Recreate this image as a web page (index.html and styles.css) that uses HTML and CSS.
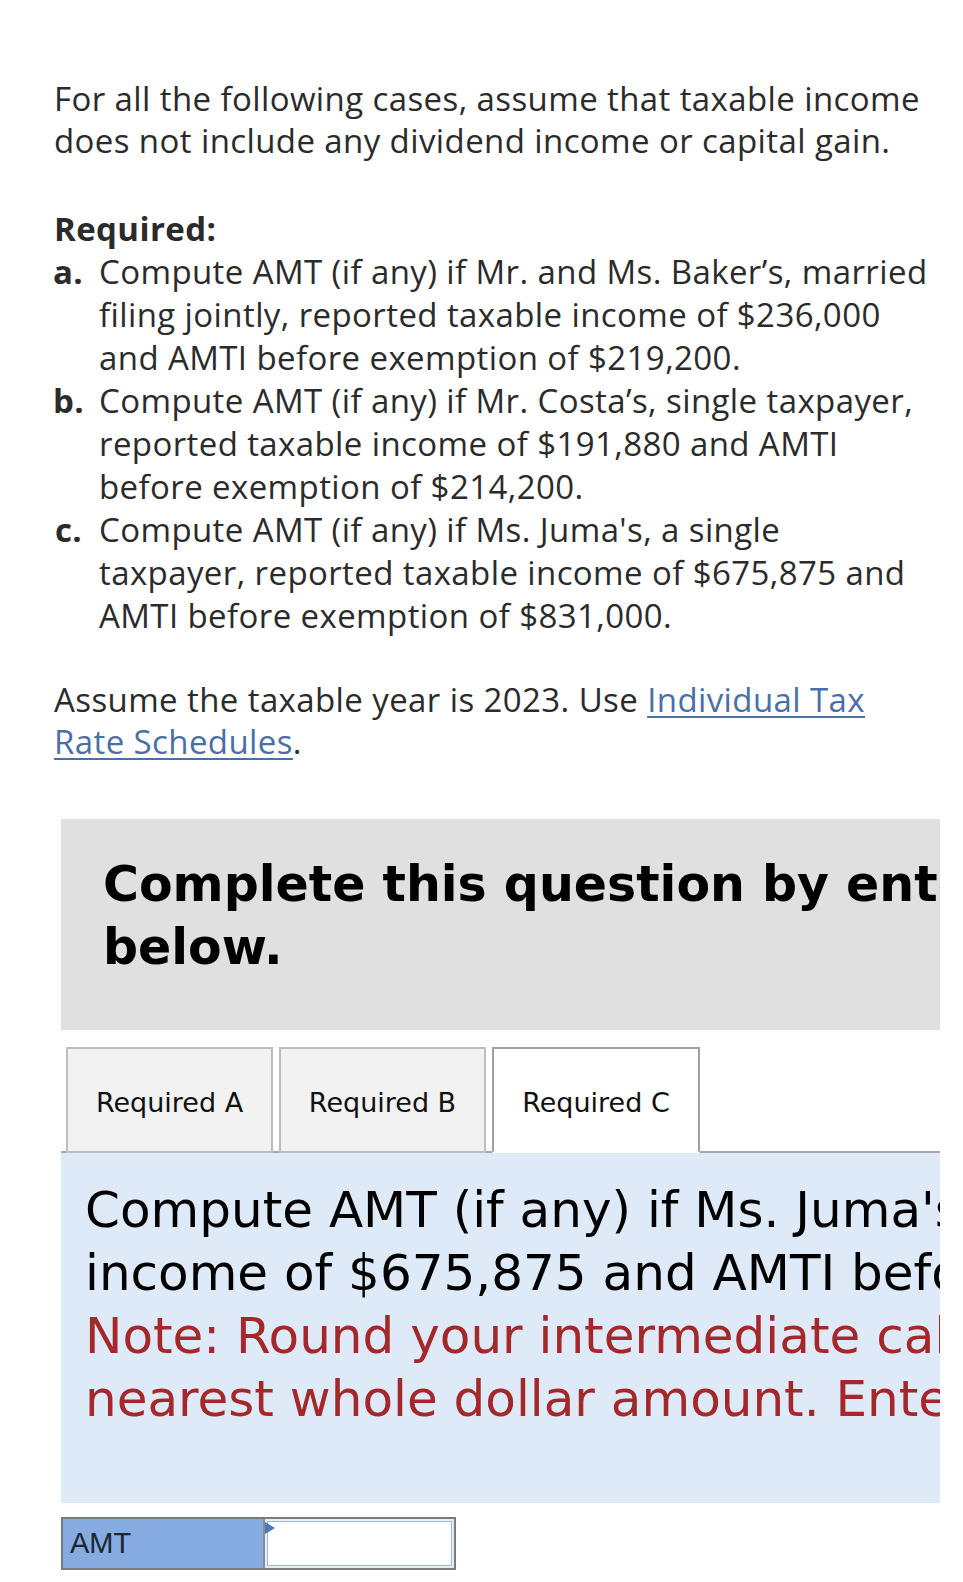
FILE: index.html
```html
<!DOCTYPE html>
<html lang="en">
<head>
<meta charset="utf-8">
<title>AMT question</title>
<link rel="stylesheet" href="styles.css">
</head>
<body>
<div class="intro">
  <p class="para">For all the following cases, assume that taxable income<br>does not include any dividend income or capital gain.</p>
  <p class="req-title">Required:</p>
  <ol class="req-list">
    <li><span class="mark">a.</span><span class="body">Compute AMT (if any) if Mr. and Ms. Baker’s, married<br>filing jointly, reported taxable income of $236,000<br>and AMTI before exemption of $219,200.</span></li>
    <li><span class="mark">b.</span><span class="body">Compute AMT (if any) if Mr. Costa’s, single taxpayer,<br>reported taxable income of $191,880 and AMTI<br>before exemption of $214,200.</span></li>
    <li><span class="mark mark-c">c.</span><span class="body">Compute AMT (if any) if Ms. Juma's, a single<br>taxpayer, reported taxable income of $675,875 and<br>AMTI before exemption of $831,000.</span></li>
  </ol>
  <p class="para assume">Assume the taxable year is 2023. Use <a class="link" href="#">Individual Tax<br>Rate Schedules</a>.</p>
</div>

<div class="question">
  <div class="banner">
    <h2 class="banner-title">Complete this question by entering your answers in the tabs<br>below.</h2>
  </div>

  <div class="tabs">
    <div class="tab">Required A</div>
    <div class="tab">Required B</div>
    <div class="tab tab-active">Required C</div>
  </div>

  <div class="panel">
    <p class="panel-text">Compute AMT (if any) if Ms. Juma's, a single taxpayer, reported taxable<br>income of $675,875 and AMTI before exemption of $831,000.<br><span class="note">Note: Round your intermediate calculations and final answer to the<br>nearest whole dollar amount. Enter 0 if no AMT is due.</span></p>
  </div>

  <div class="answer">
    <div class="answer-label">AMT</div>
    <div class="answer-input"><span class="marker"></span></div>
  </div>
</div>
</body>
</html>
```

FILE: styles.css
```css
html, body {
  margin: 0;
  padding: 0;
  background: #ffffff;
}

body {
  width: 963px;
  overflow: hidden;
}

.intro {
  padding: 78px 20px 0 54px;
  font-family: "Open Sans", Lato, sans-serif;
  font-size: 33px;
  letter-spacing: 0.4px;
  color: #2b2b2b;
}

.para {
  margin: 0;
  line-height: 42px;
  white-space: nowrap;
}

.req-title {
  margin: 46px 0 0;
  font-weight: 700;
  line-height: 42px;
}

.req-list {
  list-style: none;
  margin: 0;
  padding: 0;
  line-height: 43px;
}

.req-list li {
  display: grid;
  grid-template-columns: 45px auto;
  white-space: nowrap;
}

.mark {
  font-weight: 700;
  margin-left: -1px;
}

.mark-c {
  margin-left: 1px;
}

.assume {
  margin-top: 42px;
}

.link {
  color: #4a6fa8;
  text-decoration: underline;
  text-underline-offset: 4px;
  text-decoration-thickness: 2px;
}

.question {
  margin: 56px 0 0 61px;
  width: 879px;
  overflow: hidden;
  font-family: "DejaVu Sans", Verdana, sans-serif;
}

.banner {
  background: #e0e0e0;
  height: 211px;
  padding: 34px 0 0 42px;
  box-sizing: border-box;
}

.banner-title {
  margin: 0;
  font-size: 49px;
  line-height: 63px;
  font-weight: 700;
  color: #000000;
  white-space: nowrap;
}

.tabs {
  display: flex;
  gap: 6px;
  margin-top: 17px;
  padding-left: 5px;
  border-bottom: 2px solid #a8a8a8;
}

.tab {
  width: 207px;
  height: 106px;
  box-sizing: border-box;
  margin-bottom: -2px;
  border: 2px solid #bdbdbd;
  background: #f2f2f2;
  display: flex;
  align-items: center;
  justify-content: center;
  padding-top: 5px;
  font-size: 27px;
  color: #111111;
}

.tab-active {
  width: 208px;
  background: #ffffff;
  border-color: #a0a0a0;
  border-bottom-color: #ffffff;
}

.panel {
  background: #deeaf8;
  padding: 26px 0 72px 24px;
}

.panel-text {
  margin: 0;
  font-size: 50px;
  line-height: 63px;
  color: #000000;
  white-space: nowrap;
}

.note {
  color: #a4282a;
}

.answer {
  display: flex;
  width: 395px;
  height: 53px;
  box-sizing: border-box;
  margin-top: 14px;
  border: 2px solid #7b7b7b;
}

.answer-label {
  width: 200px;
  background: #85abe0;
  font-family: "Liberation Sans", Arial, sans-serif;
  font-size: 29px;
  color: #1c2633;
  display: flex;
  align-items: center;
  padding-left: 7px;
  box-sizing: border-box;
}

.answer-input {
  position: relative;
  flex: 1;
  border-left: 2px solid #8a8a8a;
  background: #ffffff;
  box-shadow: inset 0 0 0 2px #e8eef8, inset 0 0 0 3px #9fb6de;
}

.marker {
  position: absolute;
  left: 0;
  top: 3px;
  width: 0;
  height: 0;
  border-top: 6px solid transparent;
  border-bottom: 6px solid transparent;
  border-left: 10px solid #4a78c0;
}
```
